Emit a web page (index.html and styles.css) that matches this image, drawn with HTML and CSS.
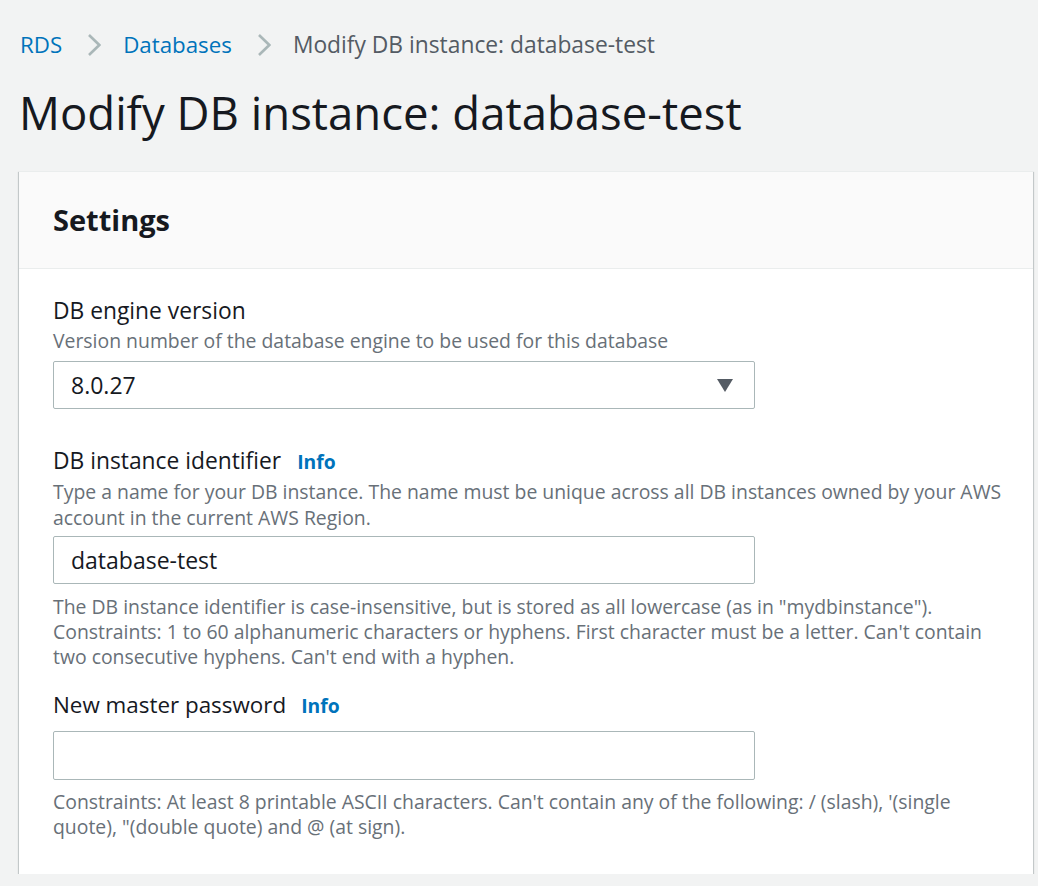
FILE: index.html
```html
<!DOCTYPE html>
<html lang="en">
<head>
<meta charset="utf-8">
<title>Modify DB instance: database-test</title>
<link rel="stylesheet" href="styles.css">
</head>
<body>
<div class="page">
  <nav class="breadcrumbs">
    <a class="crumb-link" href="#">RDS</a>
    <svg class="chev" viewBox="0 0 14 22" width="14" height="22"><path d="M2 1 L12.3 11 L2 21" fill="none" stroke="#aab7b8" stroke-width="2.6"/></svg>
    <a class="crumb-link" href="#">Databases</a>
    <svg class="chev" viewBox="0 0 14 22" width="14" height="22"><path d="M2 1 L12.3 11 L2 21" fill="none" stroke="#aab7b8" stroke-width="2.6"/></svg>
    <span class="crumb-current">Modify DB instance: database-test</span>
  </nav>
  <h1 class="page-title">Modify DB instance: database-test</h1>

  <section class="card">
    <div class="card-header">
      <h2 class="card-title">Settings</h2>
    </div>
    <div class="card-body">
      <div class="field field-first">
        <div class="label-row"><span class="label">DB engine version</span></div>
        <div class="desc">Version number of the database engine to be used for this database</div>
        <div class="control select">
          <span class="control-text">8.0.27</span>
          <svg class="caret" viewBox="0 0 16 13" width="16" height="13"><path d="M0 0 H16 L8 13 Z" fill="#545b64"/></svg>
        </div>
      </div>

      <div class="field field-second">
        <div class="label-row"><span class="label">DB instance identifier</span><a class="info" href="#">Info</a></div>
        <div class="desc desc-second">Type a name for your DB instance. The name must be unique across all DB instances owned by your AWS account in the current AWS Region.</div>
        <div class="control control-after-desc"><span class="control-text">database-test</span></div>
        <div class="hint">The DB instance identifier is case-insensitive, but is stored as all lowercase (as in "mydbinstance"). Constraints: 1 to 60 alphanumeric characters or hyphens. First character must be a letter. Can't contain two consecutive hyphens. Can't end with a hyphen.</div>
      </div>

      <div class="field field-third">
        <div class="label-row"><span class="label label-narrow">New master password</span><a class="info info-narrow" href="#">Info</a></div>
        <div class="control control-gap"></div>
        <div class="hint hint-last">Constraints: At least 8 printable ASCII characters. Can't contain any of the following: / (slash), '(single quote), "(double quote) and @ (at sign).</div>
      </div>
    </div>
  </section>
</div>
</body>
</html>
```
FILE: styles.css
```css
* { box-sizing: border-box; }
html, body { margin: 0; padding: 0; }
body {
  background: #f2f3f3;
  font-family: "Open Sans", "Noto Sans", sans-serif;
  color: #16191f;
}
.page {
  padding: 30px 5px 0 19px;
}
.breadcrumbs {
  display: flex;
  align-items: center;
  height: 30px;
  padding-left: 1px;
  font-size: 22.3px;
  line-height: 30px;
}
.crumb-link {
  color: #0073bb;
  text-decoration: none;
}
.crumb-current {
  color: #545b64;
  font-size: 22.8px;
}
.chev {
  display: block;
  margin: 0 22px 0 25px;
}
.page-title {
  margin: 24px 0 0 0;
  font-size: 45.5px;
  line-height: 56px;
  font-weight: 400;
  color: #16191f;
}
.card {
  margin-top: 31px;
  background: #fff;
  box-shadow: 0 1px 1px 0 rgba(0,28,36,.3), 1px 1px 1px 0 rgba(0,28,36,.15), -1px 1px 1px 0 rgba(0,28,36,.15);
  border-top: 1px solid #eaeded;
}
.card-header {
  background: #fafafa;
  border-bottom: 1px solid #eaeded;
  padding: 30px 33px 30px 34px;
}
.card-title {
  margin: 0;
  font-size: 29px;
  line-height: 36px;
  font-weight: 700;
}
.card-body {
  padding: 27px 20px 35px 34px;
}
.field { display: flex; flex-direction: column; }
.field-second { margin-top: 37px; }
.field-third { margin-top: 21px; }
.label-row {
  display: flex;
  align-items: baseline;
  height: 30px;
}
.label {
  font-size: 22.8px;
  line-height: 30px;
  color: #16191f;
}
.label-narrow { font-size: 22.4px; }
.info {
  margin-left: 16px;
  font-size: 19.3px;
  font-weight: 700;
  color: #0073bb;
  text-decoration: none;
}
.info-narrow { margin-left: 15px; }
.desc {
  margin-top: 2px;
  font-size: 19.4px;
  line-height: 26px;
  color: #687078;
  max-width: 958px;
}
.desc-second { margin-top: 3px; }
.control {
  margin-top: 7px;
  width: 702px;
  height: 48px;
  border: 1px solid #aab7b8;
  border-radius: 2px;
  background: #fff;
  display: flex;
  align-items: center;
  padding: 0 21px 0 17px;
}
.control-after-desc { margin-top: 5px; }
.control-gap { margin-top: 11px; height: 49px; }
.select { justify-content: space-between; }
.control-text {
  font-size: 23px;
  color: #16191f;
}
.caret { display: block; }
.hint {
  margin-top: 10px;
  font-size: 19.4px;
  line-height: 25px;
  color: #687078;
  max-width: 958px;
}
.hint-last { margin-top: 9px; }
```
